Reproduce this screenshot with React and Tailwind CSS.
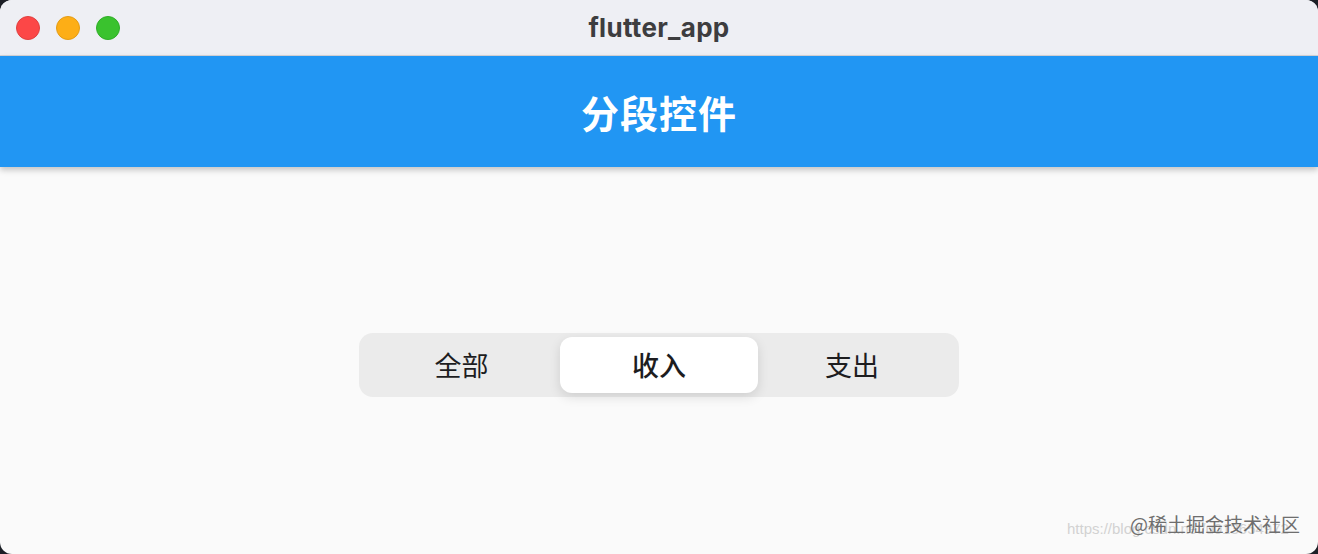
export default function App() {
  const font = { fontFamily: '"Noto Sans CJK SC", "Noto Sans", sans-serif' };
  return (
    <div className="w-[1318px] h-[554px] bg-[#1c1f26] overflow-hidden" style={font}>
      <div className="w-full h-full rounded-[12px] overflow-hidden bg-[#fafafa] flex flex-col relative">
        <div className="h-[56px] shrink-0 bg-[#eeeff4] relative flex items-center justify-center border-b border-[#d4d4d8]">
          <div className="absolute left-[16px] top-[16px] flex gap-[16px]">
            <div className="w-[24px] h-[24px] rounded-full bg-[#fc4747] border border-[#e0403f]" />
            <div className="w-[24px] h-[24px] rounded-full bg-[#fdae16] border border-[#e49c14]" />
            <div className="w-[24px] h-[24px] rounded-full bg-[#3ac22e] border border-[#2fae27]" />
          </div>
          <span className="text-[26px] font-bold text-[#3d3d3f] tracking-[0.3px]" style={{ fontFamily: 'Inter, "Noto Sans", sans-serif' }}>flutter_app</span>
        </div>
        <div className="h-[111px] shrink-0 bg-[#2196f3] flex items-center justify-center shadow-[0_3px_6px_rgba(0,0,0,0.22)] z-10">
          <span className="text-[38px] font-bold text-white tracking-[1px]">分段控件</span>
        </div>
        <div className="flex-1 flex items-start justify-center pt-[166px]">
          <div className="w-[600px] h-[64px] rounded-[14px] bg-[#ebebeb] p-[4px] flex items-center">
            <div className="w-[197px] h-full flex items-center justify-center text-[27px] text-[#1d1d1f]">全部</div>
            <div className="w-[198px] h-full rounded-[12px] bg-white shadow-[0_4px_12px_rgba(0,0,0,0.12)] flex items-center justify-center text-[27px] text-[#1d1d1f] font-medium">收入</div>
            <div className="w-[197px] h-full flex items-center justify-center pr-[9px] text-[27px] text-[#1d1d1f]">支出</div>
          </div>
        </div>
        <div className="absolute right-[6px] bottom-[12px] w-[245px] h-[30px]">
          <span className="absolute left-0 top-[6px] text-[15px] text-[#d2d2d2] whitespace-nowrap" style={{ fontFamily: '"Liberation Sans", sans-serif' }}>https://blog.csdn.net/u013654972</span>
          <span className="absolute right-[12px] top-[-2px] text-[19px] text-[#6e6e6e] whitespace-nowrap">@稀土掘金技术社区</span>
        </div>
      </div>
    </div>
  );
}
